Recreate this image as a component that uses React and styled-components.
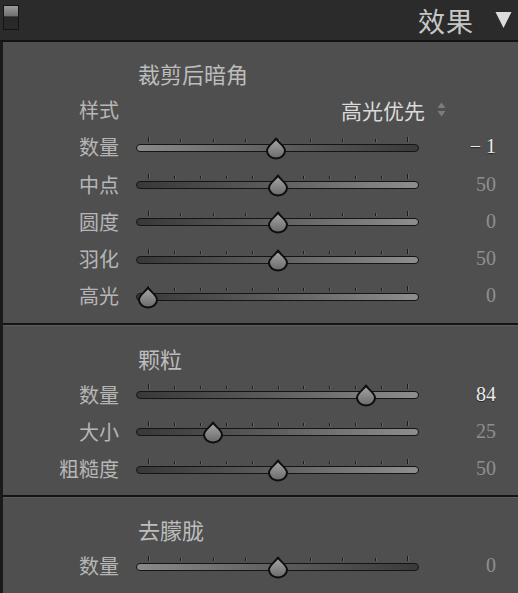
import React from 'react';
import styled, { createGlobalStyle } from 'styled-components';

const GlobalStyle = createGlobalStyle`
  html, body {
    margin: 0;
    padding: 0;
    background: #4f4f4f;
  }
  body {
    font-family: "Noto Sans CJK SC", "Noto Sans", sans-serif;
  }
`;

const SERIF_CJK = '"Liberation Serif", "Noto Sans CJK SC", serif';

const TRACK_W = 283;
const THUMB_MIN = 12;
const THUMB_RANGE = 259;

const sections = [
    {
        title: '裁剪后暗角',
        top: 19,
        style: '高光优先',
        rows: [
            { label: '数量', value: -1, min: -100, max: 100, shown: '− 1', hot: true, fade: 'down' },
            { label: '中点', value: 50, min: 0, max: 100, shown: '50', fade: 'up' },
            { label: '圆度', value: 0, min: -100, max: 100, shown: '0', fade: 'up' },
            { label: '羽化', value: 50, min: 0, max: 100, shown: '50', fade: 'up' },
            { label: '高光', value: 0, min: 0, max: 100, shown: '0', fade: 'up' },
        ],
    },
    {
        title: '颗粒',
        top: 21,
        rows: [
            { label: '数量', value: 84, min: 0, max: 100, shown: '84', hot: true, fade: 'up' },
            { label: '大小', value: 25, min: 0, max: 100, shown: '25', fade: 'up' },
            { label: '粗糙度', value: 50, min: 0, max: 100, shown: '50', fade: 'up' },
        ],
    },
    {
        title: '去朦胧',
        top: 20,
        rows: [
            { label: '数量', value: 0, min: -100, max: 100, shown: '0', fade: 'down' },
        ],
    },
];

const Header = styled.header`
    height: 40px;
    background: #2b2b2b;
    display: flex;
    align-items: center;
    padding: 0 6px 0 3px;
`;

const Toggle = styled.div`
    width: 14px;
    height: 23px;
    margin-top: -5px;
    border: 1px solid #141414;
    background: linear-gradient(#9a9a9a, #6e6e6e 45%, #272727 46%, #2a2a2a);
    box-sizing: content-box;
`;

const HeaderTitle = styled.h2`
    margin: 0 21px 0 auto;
    font-family: ${SERIF_CJK};
    font-weight: 400;
    font-size: 27px;
    color: #c6c6c6;
    letter-spacing: 1px;
`;

const Panel = styled.main`
    border-top: 2px solid #121212;
    border-left: 3px solid #1a1a1a;
    background: #4f4f4f;
`;

const Section = styled.section`
    padding: ${p => p.$top}px 0 8px;
    & + & {
        border-top: 2px solid #141414;
        box-shadow: inset 0 1px 0 #5d5d5d;
    }
`;

const SectionTitle = styled.h3`
    margin: 0 0 0 135px;
    height: 30px;
    line-height: 30px;
    font-family: ${SERIF_CJK};
    font-weight: 400;
    font-size: 22px;
    color: #bdbdbd;
`;

const Row = styled.div`
    display: grid;
    grid-template-columns: 116px ${TRACK_W}px 1fr;
    column-gap: 17px;
    align-items: center;
    height: 37.25px;
`;

const Label = styled.span`
    text-align: right;
    font-family: ${SERIF_CJK};
    font-size: 20px;
    color: #b6b6b6;
`;

const Value = styled.span`
    text-align: right;
    padding-right: 22px;
    font-family: ${SERIF_CJK};
    font-size: 20px;
    color: ${p => (p.$hot ? '#ececec' : '#8f8f8f')};
    text-shadow: ${p => (p.$hot ? '0 1px 1px #222' : 'none')};
`;

const Picker = styled.div`
    grid-column: 2 / 4;
    display: flex;
    align-items: center;
    justify-content: flex-end;
    padding-right: 72px;
    gap: 12px;
    font-family: ${SERIF_CJK};
    font-size: 21px;
    color: #dadada;
`;

const SliderBox = styled.div`
    position: relative;
    height: 22px;
    margin-top: 2px;
`;

const Tick = styled.i`
    position: absolute;
    width: 1px;
    top: ${p => (p.$end ? 0 : 2)}px;
    height: ${p => (p.$end ? 5 : 3)}px;
    background: #1c1c1c;
    box-shadow: 1px 0 0 #666;
`;

const Track = styled.div`
    position: absolute;
    left: 0;
    right: 0;
    top: 7px;
    height: 8px;
    box-sizing: border-box;
    border: 1.5px solid #151515;
    border-radius: 5px;
    background: ${p =>
        p.$fade === 'down'
            ? 'linear-gradient(90deg, #8a8a8a, #5a5a5a 55%, #3a3a3a)'
            : 'linear-gradient(90deg, #383838, #5a5a5a 45%, #8e8e8e)'};
`;

const Thumb = styled.svg`
    position: absolute;
    top: 0;
    width: 22px;
    height: 22px;
    margin-left: -11px;
    overflow: visible;
`;

function Slider({ value, min, max, fade }) {
    const count = min < 0 ? 9 : 11;
    const ticks = Array.from({ length: count }, (_, i) => THUMB_MIN + (i * THUMB_RANGE) / (count - 1));
    const x = THUMB_MIN + ((value - min) / (max - min)) * THUMB_RANGE;
    return (
        <SliderBox>
            {ticks.map((t, i) => (
                <Tick key={i} $end={i === 0 || i === count - 1} style={{ left: t }} />
            ))}
            <Track $fade={fade} />
            <Thumb viewBox="0 0 22 22" style={{ left: x }}>
                <defs>
                    <linearGradient id="thumbFill" x1="0" y1="0" x2="0" y2="1">
                        <stop offset="0" stopColor="#a8a8a8" />
                        <stop offset="1" stopColor="#6a6a6a" />
                    </linearGradient>
                </defs>
                <path
                    d="M11 1.5 C13 5.5 20 9 20 13.8 A9 7.6 0 0 1 2 13.8 C2 9 9 5.5 11 1.5 Z"
                    fill="url(#thumbFill)"
                    stroke="#0e0e0e"
                    strokeWidth="2"
                    strokeLinejoin="round"
                />
            </Thumb>
        </SliderBox>
    );
}

const Stepper = () => (
    <svg width="9" height="15" viewBox="0 0 9 15">
        <polygon points="4.5,0.5 8.5,6 0.5,6" fill="#7c7c7c" />
        <polygon points="0.5,9 8.5,9 4.5,14.5" fill="#7c7c7c" />
    </svg>
);

const App = () => (
    <>
        <GlobalStyle />
        <Header>
            <Toggle />
            <HeaderTitle>效果</HeaderTitle>
            <svg width="17" height="18" viewBox="0 0 17 18">
                <polygon points="0.5,1 16.5,1 8.5,17" fill="#dcdcdc" />
            </svg>
        </Header>
        <Panel>
            {sections.map(sec => (
                <Section key={sec.title} $top={sec.top}>
                    <SectionTitle>{sec.title}</SectionTitle>
                    {sec.style && (
                        <Row>
                            <Label>样式</Label>
                            <Picker>
                                {sec.style}
                                <Stepper />
                            </Picker>
                        </Row>
                    )}
                    {sec.rows.map(r => (
                        <Row key={r.label}>
                            <Label>{r.label}</Label>
                            <Slider value={r.value} min={r.min} max={r.max} fade={r.fade} />
                            <Value $hot={r.hot}>{r.shown}</Value>
                        </Row>
                    ))}
                </Section>
            ))}
        </Panel>
    </>
);

export default App;
